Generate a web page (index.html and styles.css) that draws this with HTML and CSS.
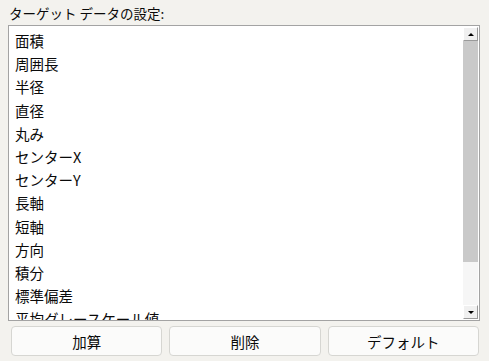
FILE: index.html
```html
<!DOCTYPE html>
<html lang="ja">
<head>
<meta charset="utf-8">
<link rel="stylesheet" href="styles.css">
</head>
<body>
<div class="panel">
  <div class="label">ターゲット データの設定:</div>
  <div class="listbox">
    <ul class="items">
      <li>面積</li>
      <li>周囲長</li>
      <li>半径</li>
      <li>直径</li>
      <li>丸み</li>
      <li>センターX</li>
      <li>センターY</li>
      <li>長軸</li>
      <li>短軸</li>
      <li>方向</li>
      <li>積分</li>
      <li>標準偏差</li>
      <li>平均グレースケール値</li>
    </ul>
    <div class="scrollbar">
      <div class="arrow up"><span class="tri-up"></span></div>
      <div class="track">
        <div class="thumb"></div>
      </div>
      <div class="arrow down"><span class="tri-down"></span></div>
    </div>
  </div>
  <div class="buttons">
    <button class="btn">加算</button>
    <button class="btn">削除</button>
    <button class="btn">デフォルト</button>
  </div>
</div>
</body>
</html>
```
FILE: styles.css
```css
html, body {
  margin: 0;
  padding: 0;
  background: #f3f2ee;
}
body {
  font-family: "Noto Sans CJK JP", "Noto Sans", sans-serif;
  color: #0a0a0a;
  width: 489px;
  height: 361px;
  overflow: hidden;
}
.panel {
  padding: 3px 8px 0 8px;
  display: flex;
  flex-direction: column;
}
.label {
  font-size: 13.5px;
  line-height: 20px;
  height: 22px;
  padding-left: 1px;
}
.listbox {
  display: flex;
  height: 296px;
  border: 1px solid #a3a3a3;
  background: #ffffff;
  width: 472px;
  box-sizing: border-box;
}
.items {
  list-style: none;
  margin: 0;
  padding: 3px 0 0 6px;
  flex: 1;
  overflow: hidden;
  font-size: 14.5px;
}
.items li {
  height: 23.2px;
  line-height: 23.2px;
  white-space: nowrap;
}
.scrollbar {
  width: 15px;
  display: flex;
  flex-direction: column;
  padding: 1px 1px 1px 0;
}
.arrow {
  height: 12px;
  background: #f0f0f0;
  display: flex;
  align-items: center;
  justify-content: center;
  border-right: 1px solid #9a9a9a;
  border-bottom: 1px solid #9a9a9a;
  border-left: 1px solid #ffffff;
  border-top: 1px solid #ffffff;
}
.tri-up {
  width: 0; height: 0;
  border-left: 3px solid transparent;
  border-right: 3px solid transparent;
  border-bottom: 3px solid #000;
}
.tri-down {
  width: 0; height: 0;
  border-left: 3px solid transparent;
  border-right: 3px solid transparent;
  border-top: 3px solid #000;
}
.track {
  flex: 1;
  background: #f6f6f6;
  display: flex;
  flex-direction: column;
}
.thumb {
  height: 221px;
  background: #c9c9c9;
}
.buttons {
  display: flex;
  gap: 7px;
  padding: 5px 2px 0 3px;
}
.btn {
  flex: 1;
  height: 30px;
  font-family: "Noto Sans CJK JP", "Noto Sans", sans-serif;
  font-size: 14.5px;
  color: #0a0a0a;
  background: #fbfbfa;
  border: 1px solid #d6d6d2;
  border-radius: 4px;
  padding: 0;
}
```
